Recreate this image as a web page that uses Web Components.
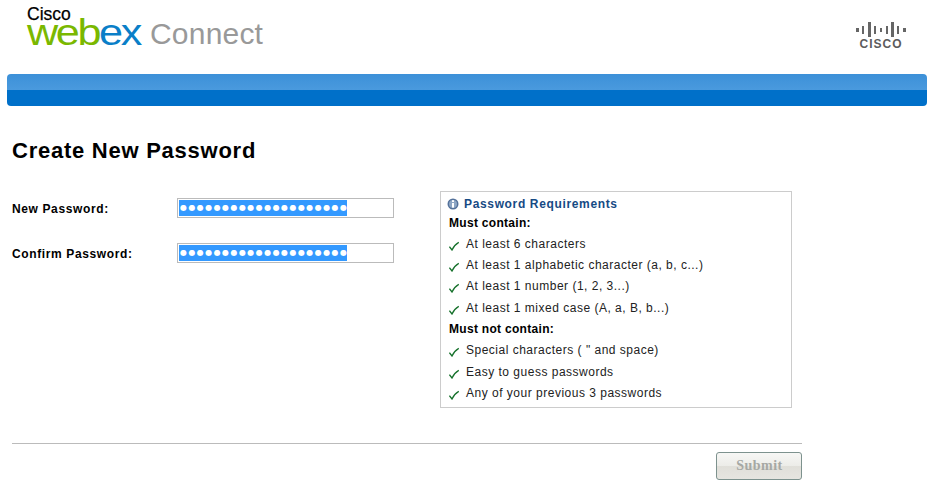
<!DOCTYPE html>
<html>
<head>
<meta charset="utf-8">
<title>Create New Password</title>
<style>
  html, body { margin: 0; padding: 0; background: #fff; }
  body { font-family: "Liberation Sans", Arial, sans-serif; color: #000; }
</style>
</head>
<body>
<wx-page>
  <wx-header></wx-header>
  <wx-bar></wx-bar>
  <wx-form>
    <wx-field slot="fields" label="New Password:"></wx-field>
    <wx-field slot="fields" label="Confirm Password:"></wx-field>
    <wx-requirements slot="side">
      <wx-req-title>Must contain:</wx-req-title>
      <wx-req>At least 6 characters</wx-req>
      <wx-req>At least 1 alphabetic character (a, b, c...)</wx-req>
      <wx-req>At least 1 number (1, 2, 3...)</wx-req>
      <wx-req>At least 1 mixed case (A, a, B, b...)</wx-req>
      <wx-req-title>Must not contain:</wx-req-title>
      <wx-req>Special characters ( " and space)</wx-req>
      <wx-req>Easy to guess passwords</wx-req>
      <wx-req>Any of your previous 3 passwords</wx-req>
    </wx-requirements>
  </wx-form>
  <wx-footer></wx-footer>
</wx-page>

<script>
"use strict";

function define(name, html, init) {
  customElements.define(name, class extends HTMLElement {
    constructor() {
      super();
      this.attachShadow({ mode: "open" });
      this.shadowRoot.innerHTML = html;
      if (init) init(this);
    }
  });
}

define("wx-page", `
  <style>
    :host { display: block; width: 931px; height: 487px; overflow: hidden; }
  </style>
  <slot></slot>
`);

define("wx-header", `
  <style>
    :host { display: flex; justify-content: space-between; height: 74px; padding: 0 25px 0 27px; box-sizing: border-box; }
    .logo { display: flex; align-items: flex-start; }
    .brand { display: flex; flex-direction: column; width: 123px; }
    .cisco { font-size: 17.5px; line-height: 14px; margin-top: 7px; letter-spacing: 0; -webkit-text-stroke: .25px #000; }
    .webex { font-size: 36px; line-height: 26px; letter-spacing: -2px; color: #7ab800; margin-top: -1px; transform: scaleX(1.2); transform-origin: left center; }
    .webex span { color: #0a7fc8; }
    .connect { font-size: 30px; line-height: 30px; color: #999; margin-top: 19px; letter-spacing: .2px; }
    .mark { display: flex; flex-direction: column; align-items: center; width: 50px; padding-top: 22px; }
    .mark svg { display: block; }
    .mark span { font-size: 12px; line-height: 10px; font-weight: bold; color: #5c5c5c; letter-spacing: 1px; margin-top: 2px; }
  </style>
  <div class="logo">
    <div class="brand">
      <div class="cisco">Cisco</div>
      <div class="webex">web<span>ex</span></div>
    </div>
    <div class="connect">Connect</div>
  </div>
  <div class="mark">
    <svg width="50" height="15" viewBox="0 0 50 15" fill="#666">
      <rect x="0" y="6" width="3" height="4"/>
      <rect x="6" y="4" width="2" height="8"/>
      <rect x="12" y="0" width="3" height="15"/>
      <rect x="18" y="4" width="2" height="8"/>
      <rect x="24" y="6" width="2" height="4"/>
      <rect x="30" y="4" width="2" height="8"/>
      <rect x="35" y="0" width="3" height="15"/>
      <rect x="41" y="4" width="2" height="8"/>
      <rect x="47" y="6" width="3" height="4"/>
    </svg>
    <span>CISCO</span>
  </div>
`);

define("wx-bar", `
  <style>
    :host {
      display: block; height: 32px; margin: 0 4px 0 7px; border-radius: 4px;
      background: linear-gradient(#3c90d8 0, #4a9ade 50%, #0070c9 50%, #0070c9 100%);
    }
  </style>
`);

define("wx-form", `
  <style>
    :host { display: block; padding: 30px 0 0 12px; }
    h1 { margin: 0; font-size: 22px; line-height: 30px; font-weight: bold; letter-spacing: .75px; color: #000; }
    .cols { display: flex; margin-top: 25px; }
    .fields { display: flex; flex-direction: column; gap: 25px; width: 428px; padding-top: 7px; box-sizing: border-box; }
  </style>
  <h1>Create New Password</h1>
  <div class="cols">
    <div class="fields"><slot name="fields"></slot></div>
    <slot name="side"></slot>
  </div>
`);

define("wx-field", `
  <style>
    :host { display: flex; align-items: center; height: 20px; }
    label { width: 165px; font-size: 12px; font-weight: bold; letter-spacing: .62px; color: #000; padding-top: 1px; }
    .input { width: 217px; height: 20px; box-sizing: border-box; border: 1px solid #bbb; padding: 1px; background: #fff; display: flex; }
    .sel { width: 168px; height: 16px; background: #3399ff; color: #fff; font: 8px/16px "DejaVu Sans", sans-serif; letter-spacing: 1.44px; white-space: nowrap; padding-left: 1px; box-sizing: border-box; }
  </style>
  <label></label>
  <div class="input"><span class="sel"></span></div>
`, (el) => {
  el.shadowRoot.querySelector("label").textContent = el.getAttribute("label");
  el.shadowRoot.querySelector(".sel").textContent = "\u25CF".repeat(22);
});

define("wx-requirements", `
  <style>
    :host { display: block; width: 352px; height: 217px; box-sizing: border-box; border: 1px solid #ccc; padding: 5px 6px 0 6px; background: #fff; }
    .head { display: flex; align-items: center; gap: 5px; height: 14px; color: #164a84; font-size: 12px; font-weight: bold; letter-spacing: .65px; }
    .head svg { display: block; flex: none; }
    .list { display: flex; flex-direction: column; margin-top: 1px; }
  </style>
  <div class="head">
    <svg width="12" height="12" viewBox="0 0 12 12">
      <circle cx="6" cy="6" r="5.5" fill="#54719a"/>
      <circle cx="6" cy="6" r="4" fill="#8ea6c4"/>
      <rect x="5" y="2.2" width="2" height="1.8" fill="#fff"/>
      <rect x="5" y="5" width="2" height="4.6" fill="#fff"/>
    </svg>
    Password Requirements
  </div>
  <div class="list"><slot></slot></div>
`);

define("wx-req-title", `
  <style>
    :host { display: flex; align-items: center; height: 21px; font-size: 12px; font-weight: bold; letter-spacing: .3px; color: #000; padding-left: 2px; }
  </style>
  <slot></slot>
`);

define("wx-req", `
  <style>
    :host { display: flex; align-items: center; gap: 7px; height: 21.4px; font-size: 12px; letter-spacing: .5px; color: #222; padding-left: 2px; white-space: nowrap; }
    svg { display: block; flex: none; margin-top: 4px; }
  </style>
  <svg width="10" height="10" viewBox="0 0 10 10" fill="none">
    <path d="M.4 5.6 L3 9 C4.4 6 6.6 3.2 9.8 1.4" stroke="#14702a" stroke-width="1.3"/>
  </svg>
  <span><slot></slot></span>
`);

define("wx-footer", `
  <style>
    :host { display: flex; flex-direction: column; align-items: flex-end; width: 790px; margin: 35px 0 0 12px; border-top: 1px solid #bbb; }
    button {
      width: 86px; height: 28px; margin-top: 8px; padding: 0 0 0 1px; box-sizing: border-box;
      border: 1px solid #7d928e; border-radius: 3px;
      background: linear-gradient(#f7f7f5 0, #ecece8 50%, #e0dfd9 52%, #e6e5e0 100%);
      color: #a6a8a4; font: bold 14px "Liberation Serif", serif; letter-spacing: .5px;
    }
  </style>
  <button type="button">Submit</button>
`);
</script>
</body>
</html>
